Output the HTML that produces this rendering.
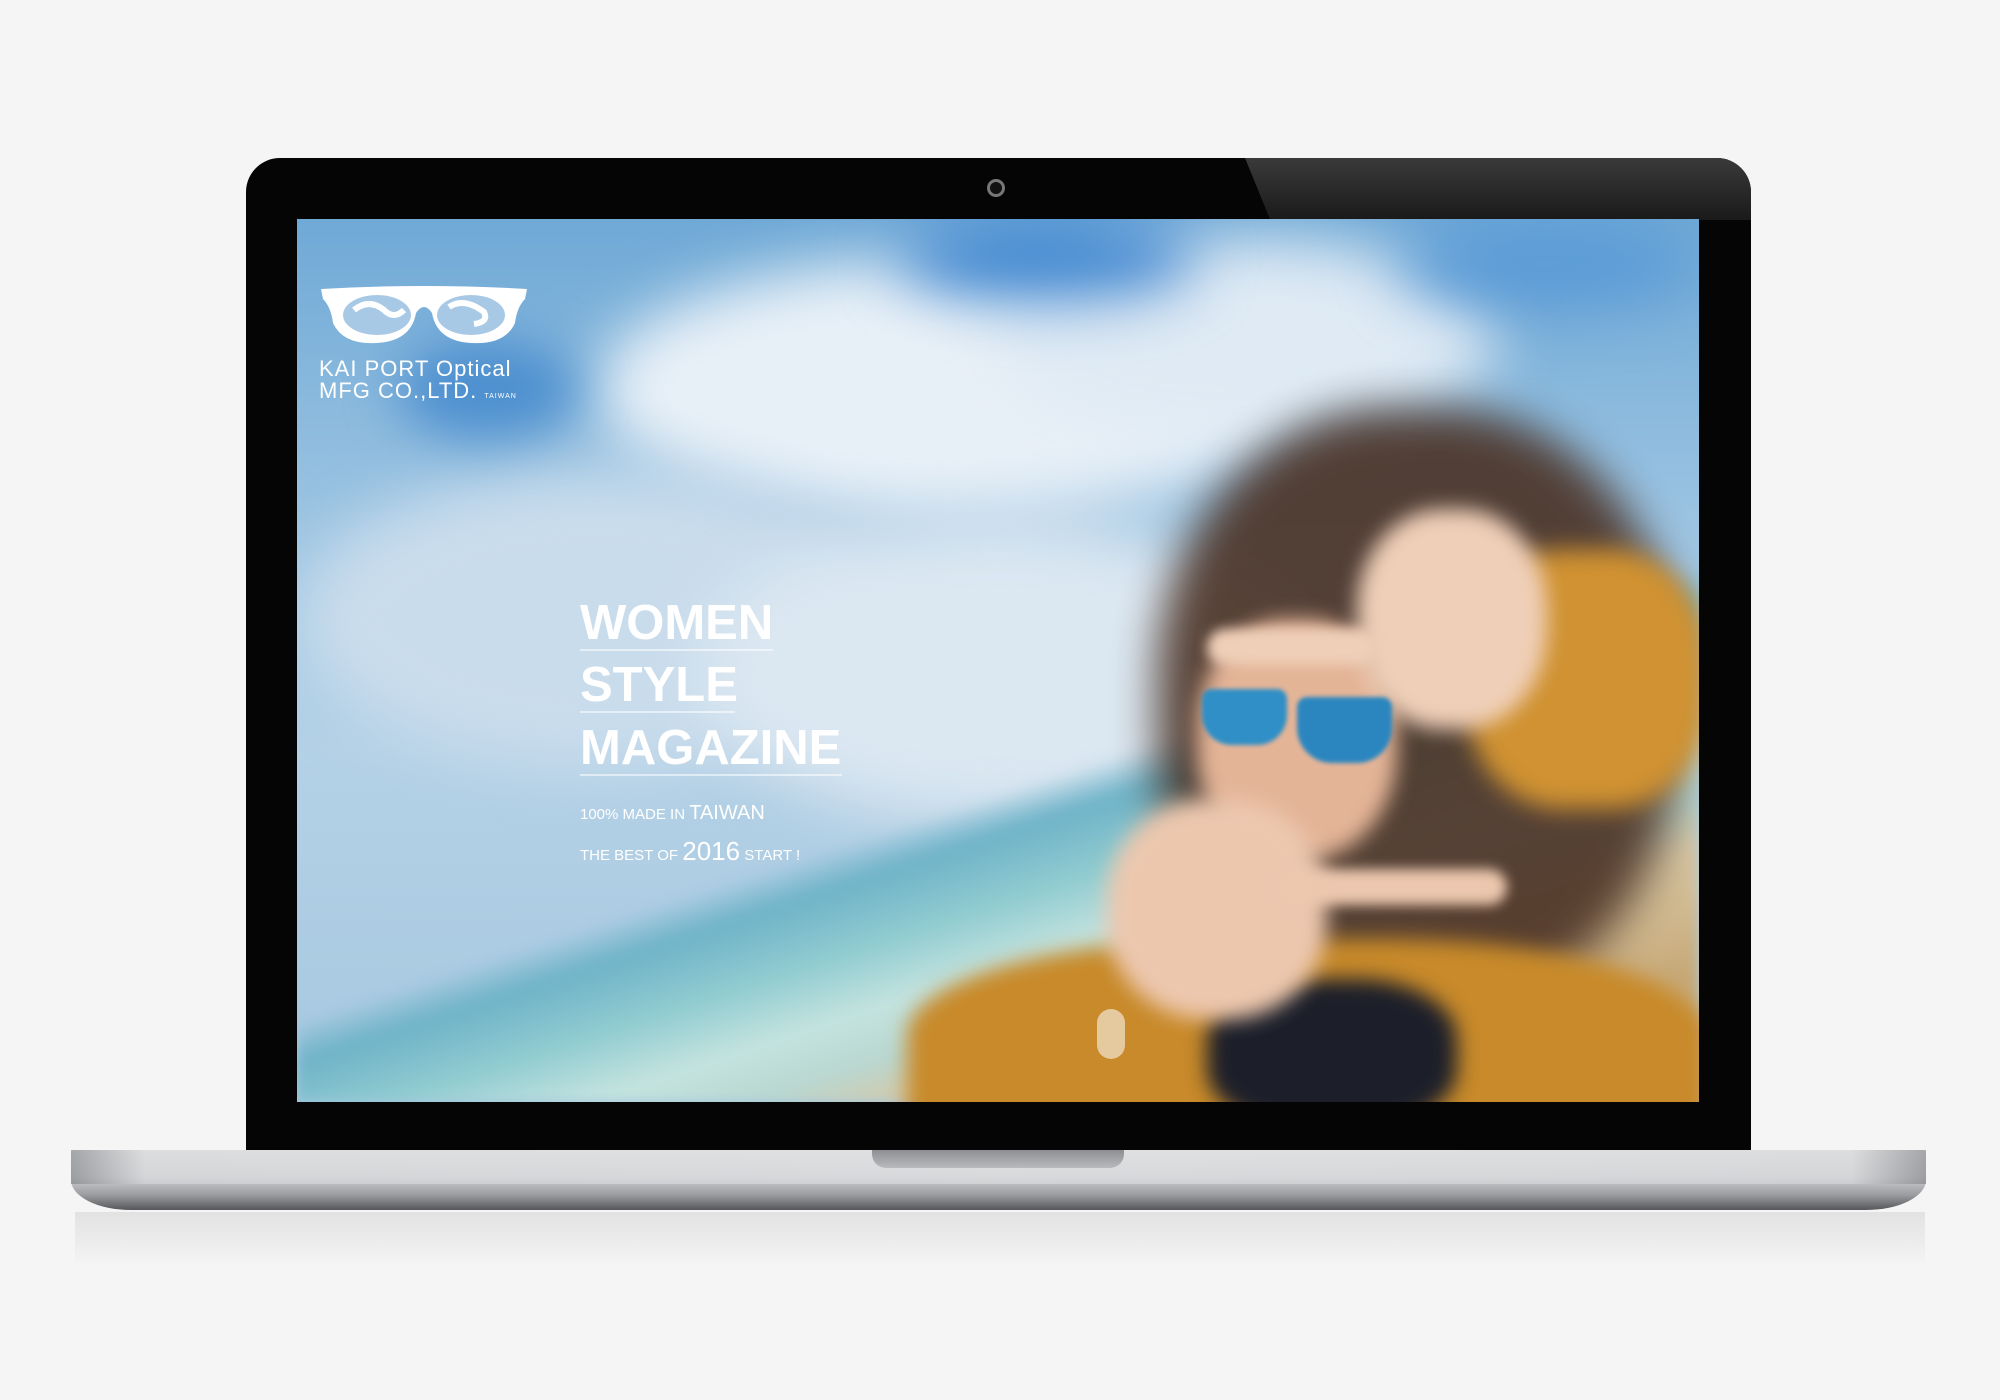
<!DOCTYPE html>
<html><head><meta charset="utf-8"><style>
html,body{margin:0;padding:0;width:2000px;height:1400px;background:#f5f5f5;overflow:hidden;font-family:"Liberation Sans",sans-serif}
.abs{position:absolute}
#lid{left:246px;top:158px;width:1505px;height:1000px;background:#050505;border-radius:34px 34px 0 0}
#glare{left:1245px;top:158px;width:506px;height:62px;background:linear-gradient(180deg,#3a3a3a,#1a1a1a);clip-path:polygon(0 0,100% 0,100% 100%,5% 100%);border-top-right-radius:34px}
#cam{left:987px;top:179px;width:18px;height:18px;border-radius:50%;border:3px solid #777;box-sizing:border-box;background:#111}
#screen{left:297px;top:219px;width:1402px;height:883px;overflow:hidden;background:linear-gradient(180deg,#6fa9d6 0%,#9cc4e2 35%,#b4d1e6 60%,#a6c8e0 100%)}
.b{position:absolute;filter:blur(30px)}
#base{left:71px;top:1150px;width:1855px;height:60px;border-radius:4px 4px 60px 60px/4px 4px 30px 30px;background:linear-gradient(180deg,#e3e4e6 0%,#cfd0d3 45%,#9a9ca0 75%,#55575b 100%)}
#baseL{left:71px;top:1150px;width:1855px;height:34px;background:linear-gradient(90deg,#7b7d80 0%,#d8d9db 4%,#dedfe1 50%,#d8d9db 96%,#7b7d80 100%);opacity:.6}
#notch{left:872px;top:1150px;width:252px;height:18px;border-radius:0 0 14px 14px;background:linear-gradient(180deg,#8d8f93,#b9babd)}
#refl{left:75px;top:1212px;width:1850px;height:55px;background:linear-gradient(180deg,#e2e2e2,#f5f5f5)}
.h{position:absolute;left:283px;color:#fff;font-weight:bold;font-size:49px;line-height:1}
.ln{position:absolute;left:283px;height:2px;background:rgba(255,255,255,.55)}
.s{position:absolute;left:283px;color:#fff;font-size:15px;white-space:nowrap}
</style></head><body>
<div id="refl" class="abs"></div>
<div id="lid" class="abs"></div>
<div id="glare" class="abs"></div>
<div id="cam" class="abs"></div>
<div id="screen" class="abs">
  <div class="b" style="left:300px;top:40px;width:700px;height:260px;background:#e8f0f7;border-radius:50%"></div>
  <div class="b" style="left:700px;top:20px;width:500px;height:200px;background:#dfeaf4;border-radius:50%"></div>
  <div class="b" style="left:0;top:250px;width:600px;height:300px;background:#c9dcec;border-radius:50%"></div>
  <div class="b" style="left:400px;top:300px;width:600px;height:300px;background:#dbe7f1;border-radius:50%"></div>
  <div class="b" style="left:100px;top:120px;width:180px;height:100px;background:#4d8fcf;border-radius:50%;filter:blur(25px)"></div>
  <div class="b" style="left:600px;top:0;width:300px;height:80px;background:#3f86d0;border-radius:50%"></div>
  <div class="b" style="left:1100px;top:0;width:300px;height:90px;background:#5b9bd6;border-radius:50%"></div>
  <div class="abs" style="left:0;top:0;width:1402px;height:883px;background:linear-gradient(162deg,transparent 60%,#6fb3c8 63%,#8fcbd0 68%,#c4e3df 73%,#b9d7d0 77%,#d8c7a4 81%,#c7a978 90%);filter:blur(6px)"></div>
  <div class="b" style="left:860px;top:190px;width:520px;height:600px;background:#4a3124;border-radius:45%;filter:blur(22px);opacity:.9"></div>
  <div class="b" style="left:610px;top:720px;width:800px;height:240px;background:#c88a2a;border-radius:40% 40% 0 0;filter:blur(10px)"></div>
  <div class="b" style="left:1170px;top:330px;width:240px;height:260px;background:#d09232;border-radius:40%;filter:blur(12px)"></div>
  <div class="b" style="left:910px;top:760px;width:250px;height:150px;background:#1c1f2a;border-radius:40%;filter:blur(10px)"></div>
  <div class="b" style="left:900px;top:400px;width:200px;height:240px;background:#e4b497;border-radius:45%;filter:blur(10px)"></div>
  <div class="b" style="left:810px;top:580px;width:220px;height:220px;background:#ecc7ae;border-radius:45%;filter:blur(10px)"></div>
  <div class="b" style="left:1060px;top:290px;width:190px;height:220px;background:#efcfb8;border-radius:45%;filter:blur(10px)"></div>
  <div class="b" style="left:910px;top:410px;width:170px;height:36px;background:#efcfb8;border-radius:20px;filter:blur(6px)"></div>
  <div class="b" style="left:980px;top:650px;width:230px;height:36px;background:#ecc7ae;border-radius:20px;filter:blur(6px)"></div>
  <div class="abs" style="left:905px;top:470px;width:85px;height:56px;background:#2f8fc6;border-radius:10px 10px 30px 30px;filter:blur(2px)"></div>
  <div class="abs" style="left:1000px;top:478px;width:95px;height:66px;background:#2b86c0;border-radius:10px 10px 35px 35px;filter:blur(2px)"></div>
  <svg class="abs" style="left:22px;top:66px" width="210" height="60" viewBox="0 0 210 60">
    <path d="M2 4 Q105 -2 208 4 L206 14 Q198 22 196 38 Q186 60 152 58 Q118 56 113 28 Q105 16 97 28 Q92 56 58 58 Q24 60 14 38 Q12 22 4 14 Z" fill="#fff"/>
    <ellipse cx="58" cy="30" rx="34" ry="20" fill="#a8c9e6"/>
    <ellipse cx="152" cy="30" rx="34" ry="20" fill="#a8c9e6"/>
    <path d="M35 25 q15-12 30 0 q10 10 20 0 M130 22 q15-10 35 5 q5 10-10 12" stroke="#fff" stroke-width="6" fill="none"/>
  </svg>
  <div class="abs" style="left:22px;top:139px;color:#fff;font-size:22px;line-height:22px;letter-spacing:1px;white-space:nowrap">KAI PORT Optical<br>MFG CO.,LTD. <span style="font-size:7px">TAIWAN</span></div>
  <div class="h" style="top:380px">WOMEN</div>
  <div class="ln" style="top:430px;width:193px"></div>
  <div class="h" style="top:442px">STYLE</div>
  <div class="ln" style="top:492px;width:155px"></div>
  <div class="h" style="top:505px">MAGAZINE</div>
  <div class="ln" style="top:555px;width:262px"></div>
  <div class="s" style="top:583px">100% MADE IN <span style="font-size:20px">TAIWAN</span></div>
  <div class="s" style="top:617px">THE BEST OF <span style="font-size:26px">2016</span> START !</div>
  <div class="abs" style="left:800px;top:790px;width:28px;height:50px;border-radius:14px;background:rgba(255,255,255,.55)"></div>
</div>
<div id="base" class="abs"></div>
<div id="baseL" class="abs"></div>
<div id="notch" class="abs"></div>
</body></html>
